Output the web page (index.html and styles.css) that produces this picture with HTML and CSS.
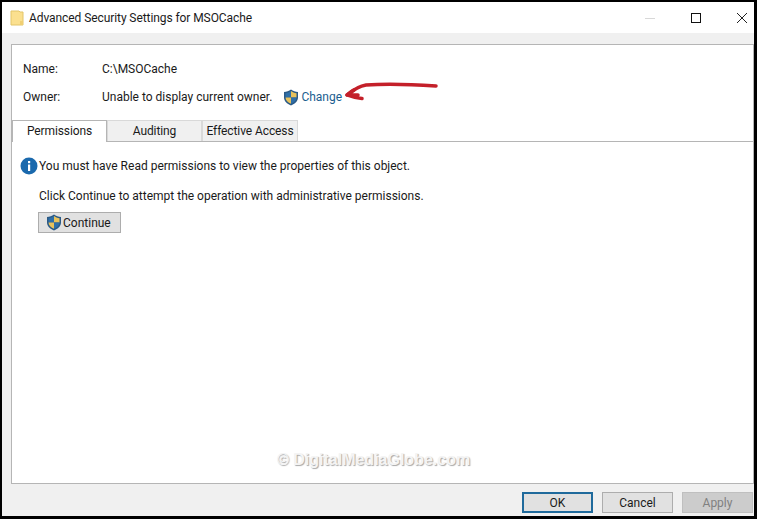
FILE: index.html
```html
<!DOCTYPE html>
<html lang="en">
<head>
  <meta charset="UTF-8">
  <title>Advanced Security Settings for MSOCache</title>
  <link rel="stylesheet" href="styles.css">
</head>
<body>
  <svg width="0" height="0" class="defs">
    <symbol id="shield" viewBox="0 0 16 17">
      <path d="M8 .5C6 2 3.500 2.800 1 3v5.500c0 3.600 3 6.500 7 8 4-1.500 7-4.400 7-8V3C12.500 2.800 10 2 8 .5z" fill="#2b5a86"/>
      <path d="M8 2v6.500H2.500V4.200C4.500 4 6.500 3.200 8 2z" fill="#2f6fa8"/>
      <path d="M8 2c1.500 1.200 3.500 2 5.500 2.200v4.300H8z" fill="#e8c25c"/>
      <path d="M2.500 8.500H8v6.300C5 13.500 2.500 11.500 2.500 8.500z" fill="#e8c25c"/>
      <path d="M8 8.500h5.500c0 3-2.500 5-5.500 6.300z" fill="#2f6fa8"/>
    </symbol>
  </svg>

  <div class="window">
    <div class="titlebar">
      <svg class="folder" width="14" height="16" viewBox="0 0 14 16">
        <path d="M1 1h8l1 1h3v13H1z" fill="#fbe08f" stroke="#e3c569" stroke-width="1"/>
        <path d="M10 11h3v4h-3z" fill="#f0cf73"/>
      </svg>
      <span class="title">Advanced Security Settings for MSOCache</span>
      <div class="win-controls">
        <svg class="win-btn" width="46" height="14" viewBox="0 0 46 14"><path d="M18 7.500h10" stroke="#d8d8d8"/></svg>
        <svg class="win-btn" width="46" height="14" viewBox="0 0 46 14"><rect x="18.500" y="2.500" width="9" height="9" fill="none" stroke="#111"/></svg>
        <svg class="win-btn" width="35" height="14" viewBox="0 0 35 14"><path d="M18 2l10 10M28 2L18 12" stroke="#222" fill="none"/></svg>
      </div>
    </div>

    <div class="content">
      <div class="panel">
        <div class="info-row name-row">
          <span class="info-label">Name:</span>
          <span>C:\MSOCache</span>
        </div>
        <div class="info-row owner-row">
          <span class="info-label">Owner:</span>
          <span>Unable to display current owner.</span>
          <svg class="shield owner-shield" width="16" height="17"><use href="#shield"/></svg>
          <a class="change-link">Change</a>
        </div>

        <div class="tabs">
          <div class="tab active">Permissions</div>
          <div class="tab">Auditing</div>
          <div class="tab last">Effective Access</div>
        </div>

        <div class="tab-body">
          <div class="notice">
            <svg class="info-icon" width="18" height="18" viewBox="0 0 18 18">
              <circle cx="9" cy="9" r="8.500" fill="#1a69ad"/>
              <rect x="8" y="7.500" width="2.200" height="6.500" fill="#fff"/>
              <rect x="8" y="4" width="2.200" height="2.200" fill="#fff"/>
            </svg>
            <span>You must have Read permissions to view the properties of this object.</span>
          </div>
          <p class="hint">Click Continue to attempt the operation with administrative permissions.</p>
          <button class="continue-btn">
            <svg class="shield" width="16" height="17"><use href="#shield"/></svg>
            Continue
          </button>
        </div>

        <svg class="arrow" width="100" height="26" viewBox="0 0 100 26">
          <path d="M94 8C72 6.500 45 5.500 24 7 17 8 11 12 5 17" fill="none" stroke="#c4202a" stroke-width="3.500" stroke-linecap="round"/>
          <path d="M5 17c5 2 10 3 15 3.500M5 17l7-5M6 17l10 0" fill="none" stroke="#c4202a" stroke-width="3.500" stroke-linecap="round"/>
        </svg>
        <div class="watermark">© DigitalMediaGlobe.com</div>
      </div>

      <div class="footer">
        <button class="dlg-btn default">OK</button>
        <button class="dlg-btn">Cancel</button>
        <button class="dlg-btn disabled">Apply</button>
      </div>
    </div>
  </div>
</body>
</html>
```

FILE: styles.css
```css
html, body {
  height: 100%;
}

body {
  background-color: #000;
  color: #1a1a1a;
  font-family: Roboto, sans-serif;
  font-size: 12px;
  margin: 0;
  padding: 2px 3px 3px 2px;
  box-sizing: border-box;
}

.defs {
  position: absolute;
}

.window {
  background-color: #f0f0f0;
  height: 100%;
  display: flex;
  flex-direction: column;
}

.titlebar {
  background-color: #fff;
  height: 31px;
  flex-shrink: 0;
  display: flex;
  align-items: center;
  padding-left: 8px;
}

.folder {
  margin-right: 5px;
}

.title {
  flex: 1;
  letter-spacing: -0.08px;
}

.win-controls {
  display: flex;
}

.win-btn {
  display: block;
}

.content {
  flex: 1;
  display: flex;
  flex-direction: column;
  padding: 11px 0 0 9px;
}

.panel {
  background-color: #fff;
  border: 1px solid #b5b5b5;
  flex: 1;
  position: relative;
}

.info-row {
  display: flex;
  align-items: center;
  height: 18px;
  padding-left: 11px;
}

.name-row {
  margin-top: 15px;
}

.owner-row {
  margin-top: 10px;
}

.info-label {
  width: 79px;
}

.owner-shield {
  margin-left: 11px;
  margin-right: 2px;
}

.change-link {
  color: #1b5e8f;
}

.tabs {
  display: flex;
  align-items: flex-end;
  height: 23px;
  margin-top: 12px;
  border-bottom: 1px solid #b5b5b5;
}

.tab {
  background-color: #f0f0f0;
  border: 1px solid #d9d9d9;
  border-bottom: none;
  height: 21px;
  line-height: 20px;
  width: 95px;
  text-align: center;
  letter-spacing: -0.1px;
  box-sizing: border-box;
}

.tab.active {
  background-color: #fff;
  border-color: #b5b5b5;
  height: 22px;
  line-height: 20px;
  margin-bottom: -1px;
}

.tab.last {
  width: 96px;
}

.tab-body {
  padding: 15px 0 0 8px;
}

.notice {
  display: flex;
  align-items: center;
  gap: 1px;
}

.hint {
  margin: 12px 0 0 19px;
  line-height: 18px;
}

.continue-btn {
  display: flex;
  align-items: center;
  gap: 1px;
  width: 83px;
  height: 21px;
  margin: 7px 0 0 18px;
  padding: 0 0 0 7px;
  background-color: #e1e1e1;
  border: 1px solid #adadad;
  color: inherit;
  font: inherit;
}

.arrow {
  position: absolute;
  left: 330px;
  top: 33px;
}

.watermark {
  position: absolute;
  left: 265px;
  top: 406px;
  color: #f4f4f4;
  font-family: "Liberation Sans", sans-serif;
  font-size: 16px;
  font-weight: bold;
  text-shadow: 1px 1px 1px #a8a8a8;
}

.footer {
  height: 32px;
  flex-shrink: 0;
  display: flex;
  justify-content: flex-end;
  gap: 9px;
  padding: 8px 1px 0 0;
  box-sizing: border-box;
}

.dlg-btn {
  width: 71px;
  height: 21px;
  background-color: #e1e1e1;
  border: 1px solid #adadad;
  color: inherit;
  font: inherit;
  padding: 0;
}

.dlg-btn.default {
  border: 2px solid #1f6a9c;
}

.dlg-btn.disabled {
  background-color: #cccccc;
  border-color: #bfbfbf;
  color: #808080;
}
```
